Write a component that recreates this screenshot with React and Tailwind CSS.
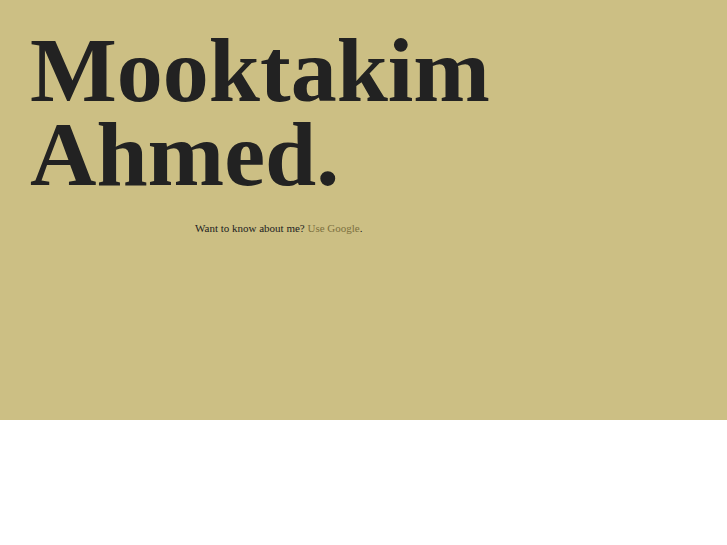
export default function App() {
  return (
    <main className="min-h-[420px] bg-[#ccbf84] px-[30px] pt-7 pb-10 font-['Liberation_Serif',serif] text-[#222222]">
      <h1 className="text-[92px] leading-[84px] font-bold">
        Mooktakim
        <br />
        Ahmed.
      </h1>
      <p className="mt-6 ml-[165px] text-[11px] leading-4 text-[#222222]">
        Want to know about me?{' '}
        <a href="https://www.google.com/" className="text-[#7c7040]">Use Google</a>.
      </p>
    </main>
  );
}
